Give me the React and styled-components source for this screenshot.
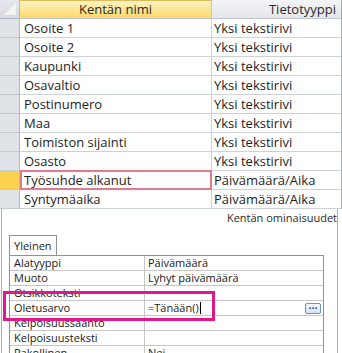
import React from "react";
import styled, { createGlobalStyle, css } from "styled-components";

const GlobalStyle = createGlobalStyle`
  html, body {
    margin: 0;
    padding: 0;
    background: #ffffff;
  }
`;

const fields = [
  { name: "Osoite 1", type: "Yksi tekstirivi" },
  { name: "Osoite 2", type: "Yksi tekstirivi" },
  { name: "Kaupunki", type: "Yksi tekstirivi" },
  { name: "Osavaltio", type: "Yksi tekstirivi" },
  { name: "Postinumero", type: "Yksi tekstirivi" },
  { name: "Maa", type: "Yksi tekstirivi" },
  { name: "Toimiston sijainti", type: "Yksi tekstirivi" },
  { name: "Osasto", type: "Yksi tekstirivi" },
  { name: "Työsuhde alkanut", type: "Päivämäärä/Aika", active: true },
  { name: "Syntymäaika", type: "Päivämäärä/Aika" },
];

const props = [
  { label: "Alatyyppi", value: "Päivämäärä" },
  { label: "Muoto", value: "Lyhyt päivämäärä" },
  { label: "Otsikkoteksti", value: "" },
  { label: "Oletusarvo", value: "=Tänään()", editing: true },
  { label: "Kelpoisuussääntö", value: "" },
  { label: "Kelpoisuusteksti", value: "" },
  { label: "Pakollinen", value: "Nei" },
];

export default function App() {
  return (
    <>
      <GlobalStyle />
      <Page>
        <FieldGrid>
          <Corner>
            <svg width="19" height="18" viewBox="0 0 19 18">
              <polygon points="4,15 16,15 16,3" fill="#f3f4f6" />
            </svg>
          </Corner>
          <HeadCell $kind="name">Kentän nimi</HeadCell>
          <HeadCell $kind="type">Tietotyyppi</HeadCell>
          {fields.map((f) => (
            <React.Fragment key={f.name}>
              <Selector $active={f.active} />
              <NameCell $active={f.active}>{f.name}</NameCell>
              <TypeCell>{f.type}</TypeCell>
            </React.Fragment>
          ))}
        </FieldGrid>

        <Lower>
          <Caption>Kentän ominaisuudet</Caption>
          <PropsPanel>
            <TabStrip>
              <Tab>Yleinen</Tab>
            </TabStrip>
            <PropGrid>
              {props.map((p) => (
                <React.Fragment key={p.label}>
                  <PropLabel>{p.label}</PropLabel>
                  <PropValue>
                    {p.value}
                    {p.editing && (
                      <>
                        <Caret />
                        <BuildButton>...</BuildButton>
                      </>
                    )}
                  </PropValue>
                </React.Fragment>
              ))}
            </PropGrid>
            <Highlight />
          </PropsPanel>
        </Lower>
      </Page>
    </>
  );
}

const Page = styled.div`
  width: 342px;
  height: 353px;
  overflow: hidden;
  background: #ffffff;
  color: #1e1e1e;
`;

const FieldGrid = styled.div`
  display: grid;
  grid-template-columns: 20px 192px 129px;
  grid-auto-rows: 19px;
  border-right: 1px solid #a9aeb6;
  font-family: "Open Sans", "Noto Sans", sans-serif;
  font-size: 13px;
`;

const Corner = styled.div`
  background: linear-gradient(#e4e7eb, #d6dae0);
  border-right: 1px solid #b3b8c0;
  border-bottom: 1px solid #b3b8c0;
  box-sizing: border-box;
  svg {
    display: block;
  }
`;

const HeadCell = styled.div`
  box-sizing: border-box;
  line-height: 18px;
  border-bottom: 1px solid #c2c7cf;
  color: #2a2a2a;
  ${({ $kind }) =>
    $kind === "name"
      ? css`
          text-align: center;
          border-top: 1px solid #e0bb5c;
          line-height: 17px;
          border-right: 1px solid #d9c79a;
          background: linear-gradient(#fff3c4, #fde594 55%, #fcd868);
        `
      : css`
          text-align: right;
          padding-right: 5px;
          background: linear-gradient(#f3f4f6, #e4e7eb);
        `}
`;

const Selector = styled.div`
  box-sizing: border-box;
  background: ${({ $active }) => ($active ? "#fad24f" : "#dfe2e7")};
  border-right: 1px solid #b3b8c0;
  border-bottom: 1px solid #c4c9d0;
`;

const NameCell = styled.div`
  box-sizing: border-box;
  padding-left: 4px;
  line-height: 18px;
  white-space: nowrap;
  border-right: 1px solid #cdd1d8;
  border-bottom: 1px solid #cdd1d8;
  ${({ $active }) =>
    $active &&
    css`
      border: 2px solid #e27a8e;
      margin-top: -1px;
      height: 20px;
      line-height: 16px;
      padding-left: 2px;
      position: relative;
    `}
`;

const TypeCell = styled.div`
  box-sizing: border-box;
  padding-left: 2px;
  line-height: 18px;
  white-space: nowrap;
  border-bottom: 1px solid #cdd1d8;
`;

const Lower = styled.div`
  margin-left: 1px;
  width: 337px;
  height: 144px;
  box-sizing: border-box;
  border-left: 1px solid #a9aeb6;
  border-right: 1px solid #a9aeb6;
`;

const Caption = styled.div`
  font-family: "Open Sans", "Noto Sans", sans-serif;
  font-size: 11px;
  line-height: 18px;
  text-align: right;
  color: #2a2a2a;
  white-space: nowrap;
`;

const PropsPanel = styled.div`
  position: relative;
  margin-top: 8px;
  padding-left: 7px;
`;

const TabStrip = styled.div`
  display: flex;
  height: 20px;
`;

const Tab = styled.div`
  width: 48px;
  box-sizing: border-box;
  border: 1px solid #8e9297;
  border-bottom: none;
  background: #ffffff;
  font-family: "Open Sans", "Noto Sans", sans-serif;
  font-size: 11px;
  line-height: 19px;
  padding-left: 4px;
  color: #222;
`;

const PropGrid = styled.div`
  width: 315px;
  box-sizing: border-box;
  display: grid;
  grid-template-columns: 135px 1fr;
  grid-auto-rows: 15px;
  border: 1px solid #8e9297;
  border-bottom: none;
  font-family: "Open Sans", "Noto Sans", sans-serif;
  font-size: 11px;
  color: #1a1a1a;
`;

const PropLabel = styled.div`
  box-sizing: border-box;
  padding-left: 4px;
  line-height: 14px;
  white-space: nowrap;
  border-right: 1px solid #c6c6c6;
  border-bottom: 1px solid #c6c6c6;
`;

const PropValue = styled.div`
  display: flex;
  align-items: center;
  box-sizing: border-box;
  padding-left: 3px;
  line-height: 14px;
  white-space: nowrap;
  border-bottom: 1px solid #c6c6c6;
`;

const Caret = styled.span`
  display: inline-block;
  width: 1px;
  height: 12px;
  background: #000;
  margin-left: 1px;
`;

const BuildButton = styled.span`
  margin-left: auto;
  margin-right: 2px;
  width: 16px;
  height: 11px;
  box-sizing: border-box;
  border: 1px solid #6f93c4;
  border-radius: 2px;
  background: linear-gradient(#f5f9fe, #d3e2f4);
  font-family: "DejaVu Sans", sans-serif;
  font-size: 8px;
  font-weight: bold;
  line-height: 5px;
  text-align: center;
  color: #1c3c74;
`;

const Highlight = styled.div`
  position: absolute;
  left: 1px;
  top: 56px;
  width: 212px;
  height: 30px;
  box-sizing: border-box;
  border: 3px solid #e2178a;
  pointer-events: none;
`;
